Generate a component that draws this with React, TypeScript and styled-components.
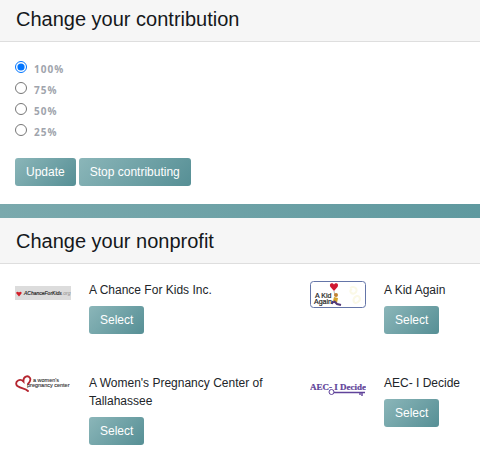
import React from 'react';
import styled, { createGlobalStyle } from 'styled-components';

const GlobalStyle = createGlobalStyle`
  * { box-sizing: border-box; }
  body {
    margin: 0;
    background: #fff;
    color: #212529;
    font-family: "Liberation Sans", Arial, sans-serif;
    font-size: 12px;
    line-height: 18px;
  }
`;

const PanelHeader = styled.header<{ $compact?: boolean }>`
  padding: ${(p) => (p.$compact ? '6px 16px 8px' : '10px 16px 8px')};
  background: #f6f6f6;
  border-bottom: 1px solid #dedede;
`;

const Title = styled.h2`
  margin: 0;
  color: #15181b;
  font-size: 20px;
  font-weight: 400;
  line-height: 27px;
`;

const ContributionForm = styled.form`
  padding: 16px 15px 18px;
`;

const Options = styled.fieldset`
  display: grid;
  margin: 0;
  padding: 0;
  border: 0;
`;

const Option = styled.label`
  display: flex;
  align-items: flex-start;
  gap: 7px;
  height: 21px;
  color: #a0a4ac;
  font-family: "Open Sans", sans-serif;
  font-size: 10px;
  font-weight: 700;
  letter-spacing: 1px;
  line-height: 22px;
`;

const Radio = styled.input`
  width: 12px;
  height: 12px;
  margin: 3px 0 0;
  accent-color: #0075ff;
`;

const Actions = styled.div`
  display: flex;
  gap: 3px;
  margin-top: 16px;
`;

const Button = styled.button`
  height: 28px;
  padding: 0 11px;
  border: 0;
  border-radius: 3px;
  background: linear-gradient(135deg, #8bb6b9, #568f95);
  color: #fff;
  font: 400 12px/18px "Liberation Sans", Arial, sans-serif;
`;

const Divider = styled.hr`
  height: 14px;
  margin: 0;
  border: 0;
  background: linear-gradient(90deg, #7aa9ad, #5f999f);
`;

const NonprofitGrid = styled.ul`
  display: grid;
  grid-template-columns: 295fr 170fr;
  row-gap: 40px;
  margin: 0;
  padding: 17px 0 20px 15px;
  list-style: none;
`;

const Nonprofit = styled.li`
  display: flex;
  align-items: flex-start;
  gap: 18px;
`;

const Logo = styled.svg`
  flex: none;
  width: 56px;
  height: 28px;
`;

const Details = styled.div`
  display: grid;
  justify-items: start;
  gap: 7px;
  max-width: 190px;
`;

const Name = styled.span`
  font-size: 12px;
`;

function ChanceLogo() {
  return (
    <Logo viewBox="0 0 56 28" role="img" aria-label="AChanceForKids.org">
      <rect y="5" width="56" height="14" fill="#dcdcdc" />
      <path d="M4 15.5 1.4 12.5C.6 10.8 3 10 4 11.6 5 10 7.300 10.800 6.500 12.500Z" fill="#d3202a" />
      <text x="9" y="14" fontFamily="Liberation Sans, sans-serif" fontStyle="italic" fontSize="5" fill="#222" stroke="#222" strokeWidth=".15">AChanceForKids<tspan fill="#888" stroke="none">.org</tspan></text>
    </Logo>
  );
}

function KidLogo() {
  return (
    <Logo viewBox="0 0 56 28" role="img" aria-label="A Kid Again">
      <rect x="0.500" y="0.500" width="55" height="26" rx="3" fill="#fff" stroke="#6475a8" />
      <path d="M24 10 20.500 6C18.500 2.500 22.500.8 24 3.500 25.500.8 29.500 2.500 27.500 6Z" fill="#cf1832" />
      <path d="M24 10 25 15" stroke="#777" strokeWidth=".5" />
      <circle cx="26" cy="14" r="2" fill="#c18234" />
      <path d="m24 16 4 1-1 5-4-2Z" fill="#d5a42c" />
      <path d="m24 20 3 3 4 1M23 20l-1 3" fill="none" stroke="#543a78" strokeWidth="2" />
      <path d="M40 7c5-3 9 2 5 5-3 2-7-2-3-4m3 8c4-3 7 2 3 5s-6-2-3-5Z" fill="none" stroke="#fbf9e6" strokeWidth="2" />
      <text fontFamily="Liberation Sans, sans-serif" fontSize="7" fill="#222" stroke="#222" strokeWidth=".2">
        <tspan x="5" y="17">A Kid</tspan><tspan x="4" y="22.500">Again</tspan>
      </text>
    </Logo>
  );
}

function WomensLogo() {
  return (
    <Logo viewBox="0 0 56 28" role="img" aria-label="a women's pregnancy center">
      <path d="M13 17C10 14 3 14 1.500 11 0 7 5 4 8.500 7.500 8 2 13 1 15 4c1 2 0 4-2 6" fill="none" stroke="#b52630" strokeWidth="1.800" strokeLinecap="round" />
      <text fontFamily="Liberation Sans, sans-serif" fontSize="5.500" fill="#2d2d2d" stroke="#2d2d2d" strokeWidth=".1">
        <tspan x="18" y="8">a women's</tspan><tspan x="12" y="13">pregnancy center</tspan>
      </text>
    </Logo>
  );
}

function DecideLogo() {
  return (
    <Logo viewBox="0 0 56 28" role="img" aria-label="AEC- I Decide">
      <text y="16" fontFamily="Liberation Serif, serif" fontWeight="700" fontSize="9" fill="#60439a" stroke="#60439a" strokeWidth=".2">AEC- I Decide</text>
      <circle cx="21.500" cy="18" r="2.500" fill="#fff" stroke="#60439a" />
      <path d="M24 18.500h31M52 19v3m-2-3v2" fill="none" stroke="#60439a" strokeWidth="1.400" />
    </Logo>
  );
}

const percentages = [100, 75, 50, 25];
const nonprofits = [
  { name: 'A Chance For Kids Inc.', Mark: ChanceLogo },
  { name: 'A Kid Again', Mark: KidLogo },
  { name: "A Women's Pregnancy Center of Tallahassee", Mark: WomensLogo },
  { name: 'AEC- I Decide', Mark: DecideLogo },
];

export default function App() {
  return (
    <main>
      <GlobalStyle />
      <section>
        <PanelHeader $compact><Title>Change your contribution</Title></PanelHeader>
        <ContributionForm onSubmit={(event) => event.preventDefault()}>
          <Options aria-label="Contribution">
            {percentages.map((value) => (
              <Option key={value}>
                <Radio type="radio" name="contribution" value={value} defaultChecked={value === 100} />
                {value}%
              </Option>
            ))}
          </Options>
          <Actions>
            <Button type="submit">Update</Button>
            <Button type="button">Stop contributing</Button>
          </Actions>
        </ContributionForm>
      </section>
      <Divider />
      <section>
        <PanelHeader><Title>Change your nonprofit</Title></PanelHeader>
        <NonprofitGrid>
          {nonprofits.map(({ name, Mark }) => (
            <Nonprofit key={name}>
              <Mark />
              <Details>
                <Name>{name}</Name>
                <Button type="button" aria-label={`Select ${name}`}>Select</Button>
              </Details>
            </Nonprofit>
          ))}
        </NonprofitGrid>
      </section>
    </main>
  );
}
